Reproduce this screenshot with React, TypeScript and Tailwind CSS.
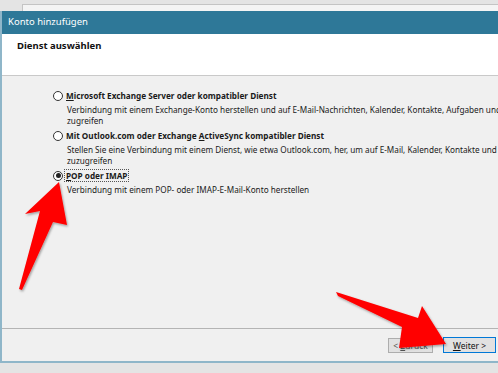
import React from "react";

const font = { fontFamily: '"Noto Sans", "Open Sans", "Liberation Sans", sans-serif' };

function Radio({ checked }: { checked?: boolean }) {
  return (
    <span className="flex h-[10px] w-[10px] shrink-0 items-center justify-center rounded-full border border-[#333] bg-white">
      {checked && <span className="h-[5px] w-[5px] rounded-full bg-[#222]" />}
    </span>
  );
}

type Option = {
  label: React.ReactNode;
  lines: string[];
  checked?: boolean;
  focus?: boolean;
};

const options: Option[] = [
  {
    label: (
      <>
        <u>M</u>icrosoft Exchange Server oder kompatibler Dienst
      </>
    ),
    lines: [
      "Verbindung mit einem Exchange-Konto herstellen und auf E-Mail-Nachrichten, Kalender, Kontakte, Aufgaben und V",
      "zugreifen",
    ],
  },
  {
    label: (
      <>
        Mit Outlook.com oder Exchange <u>A</u>ctiveSync kompatibler Dienst
      </>
    ),
    lines: [
      "Stellen Sie eine Verbindung mit einem Dienst, wie etwa Outlook.com, her, um auf E-Mail, Kalender, Kontakte und Au",
      "zuzugreifen",
    ],
  },
  {
    label: (
      <>
        <u>P</u>OP oder IMAP
      </>
    ),
    lines: ["Verbindung mit einem POP- oder IMAP-E-Mail-Konto herstellen"],
    checked: true,
    focus: true,
  },
];

function Arrows() {
  return (
    <svg className="pointer-events-none absolute left-0 top-0" width="498" height="373" viewBox="0 0 498 373">
      <defs>
        <filter id="sh" x="-20%" y="-20%" width="140%" height="140%">
          <feDropShadow dx="1" dy="1.5" stdDeviation="1.2" floodColor="#000" floodOpacity="0.35" />
        </filter>
      </defs>
      <path
        d="M59 182 L25 214 L40 211 L19 289 L22 290 L53 222 L67 225 Z"
        fill="#ff0000"
        filter="url(#sh)"
      />
      <path
        d="M336 292 L338 296 L402 327 L399 348 L446 344 L422 306 L418 318 Z"
        fill="#ff0000"
        filter="url(#sh)"
      />
    </svg>
  );
}

export default function App() {
  return (
    <div className="relative h-[373px] w-[498px] overflow-hidden bg-[#e4e4e4]" style={font}>
      {/* window behind */}
      <div className="flex h-[11px]">
        <div className="w-[22px]" />
        <div className="mt-[4px] flex-1 border-l border-t border-[#c4c4c4] bg-[#f4f4f4]" />
      </div>

      <div className="flex h-[352px] flex-col border-b-[2px] border-l-[2px] border-[#8fb6c9] bg-[#f0f0f0]">
        <div className="flex h-[23px] shrink-0 items-center bg-[#2e7898] pl-[6px] text-[9.5px] text-white">
          Konto hinzufügen
        </div>
        <div className="h-[42px] shrink-0 border-b border-[#c9c9c9] bg-white pl-[15px] pt-[5px] text-[9.5px] font-bold text-[#111]">
          Dienst auswählen
        </div>

        <div className="flex flex-1 flex-col gap-[3px] overflow-hidden pl-[51px] pt-[13px] text-[8.2px] text-[#1a1a1a]">
          {options.map((o, i) => (
            <div key={i} className="flex flex-col">
              <div className="flex h-[13px] items-center gap-[2px]">
                <Radio checked={o.checked} />
                <span
                  className={`whitespace-nowrap px-[1px] font-bold leading-[11px] ${
                    o.focus ? "outline outline-1 outline-dotted outline-[#555]" : ""
                  }`}
                >
                  {o.label}
                </span>
              </div>
              <div className="flex flex-col pl-[14px] pt-[2px]">
                {o.lines.map((l, j) => (
                  <div key={j} className="h-[11px] whitespace-nowrap leading-[11px]">
                    {l}
                  </div>
                ))}
              </div>
            </div>
          ))}
        </div>

        <div className="flex h-[33px] shrink-0 items-center justify-end gap-[10px] border-t border-[#b4b4b4] pr-[2px] text-[8.5px]">
          <button className="h-[15px] w-[45px] border border-[#adadad] bg-[#e1e1e1] leading-[13px] text-[#555]">
            &lt; <u>Z</u>urück
          </button>
          <button className="h-[16px] w-[53px] border-[1.5px] border-[#0078d7] bg-[#e1e1e1] leading-[13px] text-[#111]">
            <u>W</u>eiter &gt;
          </button>
        </div>
      </div>

      <Arrows />
    </div>
  );
}
